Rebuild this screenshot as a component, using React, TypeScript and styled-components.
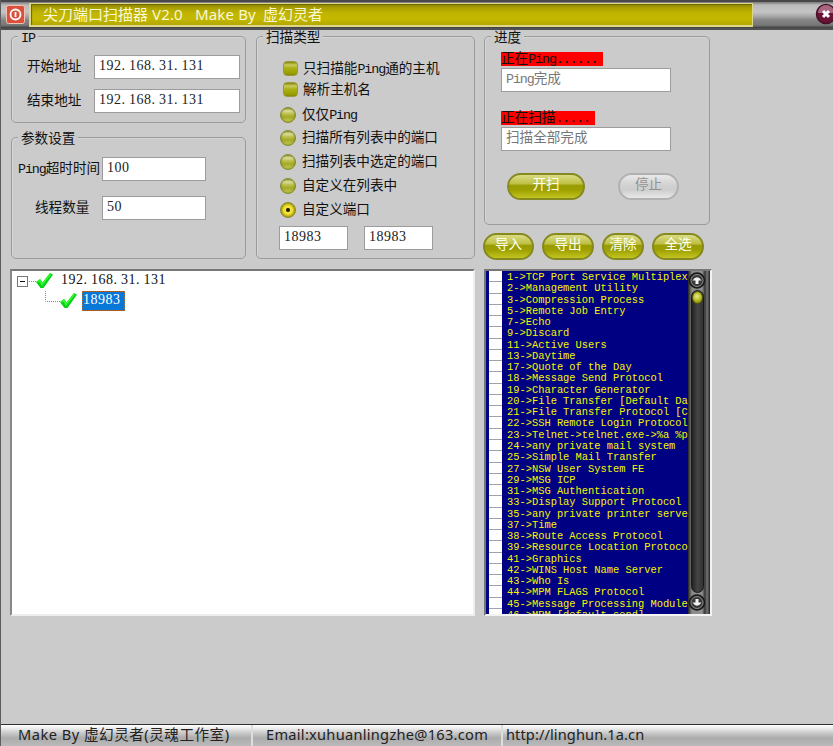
import React from "react";
import styled, { createGlobalStyle } from "styled-components";

const Global = createGlobalStyle`
  *, *::before, *::after { box-sizing: border-box; }
  body { margin: 0; background: #cbcbcb; overflow: hidden; }
`;

const song = `"Liberation Mono", "Noto Sans CJK SC", monospace`;
const ui = `"Noto Sans", "Noto Sans CJK SC", sans-serif`;

const Window = styled.div`
  width: 833px;
  height: 746px;
  display: flex;
  flex-direction: column;
  overflow: hidden;
  background: #cbcbcb;
  border-left: 1px solid #5d5d60;
  color: #111;
  font: 13.6px/16px ${song};
`;

const TitleBar = styled.header`
  height: 30px;
  flex: none;
  display: flex;
  align-items: flex-start;
  padding-top: 3px;
  border-top: 2px solid #48484a;
  border-bottom: 2px solid #505052;
  background: linear-gradient(#777 0, #bbb 3px, #c4c4c4 10px, #aaa 14px, #858585 18px, #777 23px, #555 25px, #333 26px);
`;

const AppIcon = styled.div`
  width: 19px;
  height: 19px;
  margin: 0 3px 0 5px;
  svg { display: block; }
`;

const TitlePlate = styled.h1`
  width: 724px;
  height: 24px;
  margin: -2px 0 0 1px;
  padding-left: 12px;
  border: 1px solid #ddd887;
  border-width: 1px 1px 2px 2px;
  background: linear-gradient(#8e8500 0, #aaa000 4px, #c1b500 9px, #c4b800 15px, #b3a700 21px);
  box-shadow: inset 1px 1px 1px #6f6900;
  color: #f8f7d8;
  font: 400 15px/20px ${ui};
  white-space: pre;
`;

const TitleLatin = styled.span<{ $w: number }>`
  display: inline-block;
  width: ${(p) => p.$w}px;
  letter-spacing: 0.15px;
`;

const CloseButton = styled.button`
  width: 22px;
  height: 22px;
  margin: -2px -4px 0 auto;
  padding: 0;
  border: 0;
  background: none;
  svg { display: block; }
`;

const Body = styled.main`
  flex: 1;
  display: grid;
  grid-template-columns: 465px 228px;
  column-gap: 9px;
  align-content: start;
  padding: 6px 0 0 9px;
`;

const LeftSide = styled.div`
  display: grid;
  grid-template-columns: 235px 219px;
  grid-template-rows: 223px 347px;
  column-gap: 10px;
  row-gap: 10px;
  padding-left: 1px;
`;

const Stack = styled.div`
  display: flex;
  flex-direction: column;
`;

const Group = styled.section<{ $h: number }>`
  height: ${(p) => p.$h}px;
  border: 1px solid #9b9b9b;
  border-radius: 5px;
  box-shadow: inset 1px 1px 0 #d6d6d6;
`;

const ParamGroup = styled(Group)`
  margin-top: 14px;
`;

const ProgressGroup = styled(Group)`
  width: 226px;
`;

const Legend = styled.h2`
  width: max-content;
  height: 14px;
  margin: -7px 0 0 6px;
  padding: 0 3px;
  background: #cbcbcb;
  font: 13.6px/17px ${song};
`;

const Latin = styled.span`
  font-size: 13.4px;
  letter-spacing: -1.1px;
`;

const Field = styled.div<{ $gap: number }>`
  height: 24px;
  display: flex;
  align-items: center;
  margin-top: ${(p) => p.$gap}px;
`;

const FieldLabel = styled.label<{ $w: number; $indent: number }>`
  flex: none;
  width: ${(p) => p.$w}px;
  padding: 2px 0 0 ${(p) => p.$indent}px;
  white-space: nowrap;
`;

const Box = styled.div<{ $w: number; $dim?: boolean }>`
  width: ${(p) => p.$w}px;
  height: 24px;
  flex: none;
  padding: ${(p) => (p.$dim ? "3px 0 0 4px" : "1px 0 0 4px")};
  border: 1px solid #9c9c9c;
  background: #fff;
  color: ${(p) => (p.$dim ? "#777" : "#222")};
  white-space: nowrap;
`;

const Digits = styled.span`
  font: 14px/18px "Liberation Serif", serif;
  letter-spacing: 0.5px;
`;

const Dot = styled.span`
  display: inline-block;
  width: 7.5px;
`;

const Option = styled.div<{ $gap: number; $square?: boolean }>`
  height: 16px;
  display: flex;
  align-items: center;
  gap: ${(p) => (p.$square ? 5 : 6)}px;
  padding-left: ${(p) => (p.$square ? 26 : 23)}px;
  margin-top: ${(p) => p.$gap}px;
  white-space: nowrap;
`;

const OptionText = styled.span`
  padding-top: 3px;
`;

const Check = styled.i`
  width: 15px;
  height: 15px;
  border: 1px solid #9b9a3b;
  border-radius: 4px;
  background: linear-gradient(#85850c 0, #c9cc5d 3px, #adb018 6px, #9ba000 11px, #858a00);
  margin-top: 1px;
`;

const Radio = styled.i<{ $on?: boolean }>`
  width: 16px;
  height: 16px;
  border: 1px solid #85882c;
  border-radius: 50%;
  margin-top: 1px;
  background: ${(p) =>
    p.$on
      ? "radial-gradient(circle, #221d00 0 1.5px, #f3e43d 2.5px 4px, #cfbd12 6px, #aba026)"
      : "linear-gradient(#a0a43c 0, #dcdfa0 3px, #b9be48 6px, #a4a928 9px, #c4c850 13px)"};
  box-shadow: inset 0 0 2px #777b10;
`;

const PortRange = styled.div`
  display: flex;
  gap: 16px;
  margin: 9px 0 0 22px;
`;

const Progress = styled.p<{ $w: number; $gap: number }>`
  width: ${(p) => p.$w}px;
  height: 14px;
  margin: ${(p) => p.$gap}px 0 2px 16px;
  background: #fe0000;
  line-height: 15px;
  white-space: nowrap;
`;

const Inset = styled.div`
  padding-left: 16px;
`;

const Pill = styled.button<{ $w: number; $off?: boolean }>`
  width: ${(p) => p.$w}px;
  height: 27px;
  padding: 0 0 2px;
  border: 2px solid ${(p) => (p.$off ? "#b1b1b1" : "#858920")};
  border-radius: 14px;
  background: ${(p) =>
    p.$off
      ? "linear-gradient(#e9e9e9, #d3d3d3 40%, #cdcdcd 65%, #e9e9e9)"
      : "linear-gradient(#dadc85 0, #bec044 38%, #989c00 46%, #9da000 65%, #c2c520 100%)"};
  color: ${(p) => (p.$off ? "#929292" : "#fffff0")};
  font: 13.6px/17px ${song};
  white-space: nowrap;
`;

const Actions = styled.div`
  display: flex;
  gap: 33px;
  margin: 22px 0 0 22px;
`;

const Toolbar = styled.div`
  display: flex;
  gap: 8px;
  margin: 8px 0 9px -1px;
`;

const Tree = styled.div`
  grid-column: 1 / -1;
  margin-left: -1px;
  padding: 0 0 0 5px;
  border: 2px solid #eee;
  border-top-color: #777;
  border-left-color: #888;
  background: #fff;
`;

const TreeRow = styled.div<{ $indent: number }>`
  height: 20px;
  display: flex;
  align-items: center;
  padding-left: ${(p) => p.$indent}px;
  svg { flex: none; }
`;

const TreeLabel = styled.span<{ $selected?: boolean }>`
  margin-left: ${(p) => (p.$selected ? 5 : 7)}px;
  padding: 0 1px;
  height: 20px;
  line-height: 18px;
  ${(p) =>
    p.$selected &&
    "width:43px;background:#0878d8;color:#fff;outline:1px dotted #b46a2c;outline-offset:-1px;"}
`;

const PortPane = styled.div`
  height: 347px;
  display: flex;
  border: 2px solid #f3f3f3;
  border-top-color: #777;
  border-left-color: #777;
  background: #000082;
  overflow: hidden;
`;

const PortList = styled.ul`
  width: 202px;
  margin: 0;
  padding: 0 0 0 3px;
  list-style: none;
  overflow: hidden;
`;

const PortItem = styled.li`
  height: 11.27px;
  display: flex;
  gap: 5px;
  color: #f6f600;
  font: 10.4px/12px "Liberation Mono", monospace;
  white-space: pre;
  &::before {
    content: "";
    flex: none;
    width: 13px;
    background: #fff;
    border-bottom: 1px solid #a2a2ae;
  }
`;

const ScrollBar = styled.div`
  width: 22px;
  height: 343px;
  flex: none;
  display: flex;
  flex-direction: column;
  align-items: center;
  padding: 0 4px 2px 0;
  background: linear-gradient(90deg, #222 0, #8b8b8b 4px, #909090 14px, #333 17px, #777 19px, #222 22px);
  svg { display: block; flex: none; }
`;

const Track = styled.div`
  flex: 1;
  width: 13px;
  border: 1px solid #181818;
  border-radius: 7px;
  background: linear-gradient(90deg, #222, #444 50%, #333);
`;

const Thumb = styled.div`
  width: 11px;
  height: 13px;
  border-radius: 50%;
  border: 1px solid #555b08;
  background: radial-gradient(circle at 45% 40%, #e8ec8c 0, #b5bb25 4px, #838900 7px);
`;

const StatusBar = styled.footer`
  height: 22px;
  flex: none;
  display: grid;
  grid-template-columns: 252px 250px 1fr;
  border-top: 1px solid #303030;
  background: linear-gradient(#fff 0, #eee 3px, #d0d0d0 7px, #ababab 13px, #b9b9b9 20px);
`;

const StatusCell = styled.div<{ $pad: number; $ls: number }>`
  padding-left: ${(p) => p.$pad}px;
  border-right: 2px solid #ddd;
  color: #222;
  font: 14.6px/18px ${ui};
  letter-spacing: ${(p) => p.$ls}px;
  white-space: nowrap;
  &:last-child { border-right: 0; }
`;

const Mixed = ({ text }: { text: string }) => (
  <>
    {text
      .split(/([\x20-\x7e]+)/)
      .map((part, i) => (i % 2 ? <Latin key={i}>{part}</Latin> : part))}
  </>
);

const Numeric = ({ value }: { value: string }) => (
  <Digits>
    {value.split(/(\.)/).map((part, i) => (i % 2 ? <Dot key={i}>{part}</Dot> : part))}
  </Digits>
);

const CheckMark = () => (
  <svg width="17" height="16" viewBox="0 0 17 16">
    <path d="M0 9 L4 6 L6.500 9.500 L14 0 L17 1.500 L7.500 15 L4.500 15 Z" fill="#08cf18" />
    <path d="M1.500 9 L4 7.500 L6 11.500 L14.500 1" fill="none" stroke="#2dfb2b" strokeWidth="1.800" />
  </svg>
);

const Branch = () => (
  <svg width="19" height="20" viewBox="0 0 19 20">
    <rect x=".5" y="5.500" width="10" height="10" fill="#fff" stroke="#777" />
    <path d="M3 10.500 H8" stroke="#111" />
    <path d="M12 10.500 H19" stroke="#888" strokeDasharray="1 1" />
  </svg>
);

const Elbow = () => (
  <svg width="15" height="20" viewBox="0 0 15 20">
    <path d="M.5 0 V10.500 H15" fill="none" stroke="#888" strokeDasharray="1 1" />
  </svg>
);

const ScrollArrow = ({ down }: { down?: boolean }) => (
  <svg width="18" height="19" viewBox="0 0 18 19">
    <circle cx="9" cy="9.500" r="7.500" fill="#3a3a3a" stroke="#161616" strokeWidth="1.500" />
    <circle cx="9" cy="9.500" r="6" fill="none" stroke="#888" />
    <path
      d="M4.500 9.500 Q9 3 13.500 9.500 H10.500 V13 H7.500 V9.500 Z"
      fill="#f4f4f4"
      transform={down ? "rotate(180 9 9.500)" : undefined}
    />
  </svg>
);

const options = [
  { label: "仅仅Ping", gap: 9 },
  { label: "扫描所有列表中的端口", gap: 7 },
  { label: "扫描列表中选定的端口", gap: 8 },
  { label: "自定义在列表中", gap: 8 },
  { label: "自定义端口", gap: 8, on: true },
];

const ports = [
  "1->TCP Port Service Multiplex",
  "2->Management Utility",
  "3->Compression Process",
  "5->Remote Job Entry",
  "7->Echo",
  "9->Discard",
  "11->Active Users",
  "13->Daytime",
  "17->Quote of the Day",
  "18->Message Send Protocol",
  "19->Character Generator",
  "20->File Transfer [Default Da",
  "21->File Transfer Protocol [C",
  "22->SSH Remote Login Protocol",
  "23->Telnet->telnet.exe->%a %p",
  "24->any private mail system",
  "25->Simple Mail Transfer",
  "27->NSW User System FE",
  "29->MSG ICP",
  "31->MSG Authentication",
  "33->Display Support Protocol",
  "35->any private printer serve",
  "37->Time",
  "38->Route Access Protocol",
  "39->Resource Location Protoco",
  "41->Graphics",
  "42->WINS Host Name Server",
  "43->Who Is",
  "44->MPM FLAGS Protocol",
  "45->Message Processing Module",
  "46->MPM [default send]",
];

export default function App() {
  return (
    <Window>
      <Global />
      <TitleBar>
        <AppIcon>
          <svg width="19" height="19" viewBox="0 0 19 19">
            <rect x=".5" y=".5" width="18" height="18" rx="2" fill="#d9513a" stroke="#f3c1b5" />
            <circle cx="9.500" cy="9.500" r="5" fill="none" stroke="#fff" strokeWidth="1.800" />
            <path d="M9.500 7 V12" stroke="#fff" strokeWidth="1.800" />
          </svg>
        </AppIcon>
        <TitlePlate>
          尖刀端口扫描器
          <TitleLatin $w={47}> V2.0</TitleLatin>
          <TitleLatin $w={68}>Make By</TitleLatin>
          虚幻灵者
        </TitlePlate>
        <CloseButton aria-label="close">
          <svg width="22" height="22" viewBox="0 0 22 22">
            <circle cx="11" cy="11" r="9.500" fill="#6b1237" stroke="#431023" strokeWidth="1.500" />
            <path d="M3 10 A8 8 0 0 1 19 10 Z" fill="#a66680" />
            <path d="M8 8 L14 14 M14 8 L8 14" stroke="#fff" strokeWidth="3" />
          </svg>
        </CloseButton>
      </TitleBar>

      <Body>
        <LeftSide>
          <Stack>
            <Group $h={87}>
              <Legend><Mixed text="IP" /></Legend>
              <Field $gap={11}>
                <FieldLabel $w={82} $indent={15}>开始地址</FieldLabel>
                <Box $w={146}><Numeric value="192.168.31.131" /></Box>
              </Field>
              <Field $gap={10}>
                <FieldLabel $w={82} $indent={15}>结束地址</FieldLabel>
                <Box $w={146}><Numeric value="192.168.31.131" /></Box>
              </Field>
            </Group>
            <ParamGroup $h={122}>
              <Legend>参数设置</Legend>
              <Field $gap={12}>
                <FieldLabel $w={90} $indent={6}><Mixed text="Ping超时时间" /></FieldLabel>
                <Box $w={104}><Numeric value="100" /></Box>
              </Field>
              <Field $gap={15}>
                <FieldLabel $w={90} $indent={23}>线程数量</FieldLabel>
                <Box $w={104}><Numeric value="50" /></Box>
              </Field>
            </ParamGroup>
          </Stack>

          <Group $h={223}>
            <Legend>扫描类型</Legend>
            <Option $gap={16} $square>
              <Check />
              <OptionText><Mixed text="只扫描能Ping通的主机" /></OptionText>
            </Option>
            <Option $gap={5} $square>
              <Check />
              <OptionText>解析主机名</OptionText>
            </Option>
            {options.map((o) => (
              <Option key={o.label} $gap={o.gap}>
                <Radio $on={o.on} />
                <OptionText><Mixed text={o.label} /></OptionText>
              </Option>
            ))}
            <PortRange>
              <Box $w={69}><Numeric value="18983" /></Box>
              <Box $w={69}><Numeric value="18983" /></Box>
            </PortRange>
          </Group>

          <Tree>
            <TreeRow $indent={0}>
              <Branch />
              <CheckMark />
              <TreeLabel><Numeric value="192.168.31.131" /></TreeLabel>
            </TreeRow>
            <TreeRow $indent={28}>
              <Elbow />
              <CheckMark />
              <TreeLabel $selected><Numeric value="18983" /></TreeLabel>
            </TreeRow>
          </Tree>
        </LeftSide>

        <Stack>
          <ProgressGroup $h={189}>
            <Legend>进度</Legend>
            <Progress $w={102} $gap={8}><Mixed text="正在Ping......" /></Progress>
            <Inset><Box $w={170} $dim><Mixed text="Ping完成" /></Box></Inset>
            <Progress $w={94} $gap={19}><Mixed text="正在扫描....." /></Progress>
            <Inset><Box $w={170} $dim>扫描全部完成</Box></Inset>
            <Actions>
              <Pill $w={78}>开扫</Pill>
              <Pill $w={61} $off>停止</Pill>
            </Actions>
          </ProgressGroup>
          <Toolbar>
            <Pill $w={51}>导入</Pill>
            <Pill $w={52}>导出</Pill>
            <Pill $w={42}>清除</Pill>
            <Pill $w={52}>全选</Pill>
          </Toolbar>
          <PortPane>
            <PortList>
              {ports.map((p) => <PortItem key={p}>{p}</PortItem>)}
            </PortList>
            <ScrollBar>
              <ScrollArrow />
              <Track><Thumb /></Track>
              <ScrollArrow down />
            </ScrollBar>
          </PortPane>
        </Stack>
      </Body>

      <StatusBar>
        <StatusCell $pad={17} $ls={0.5}>Make By 虚幻灵者(灵魂工作室)</StatusCell>
        <StatusCell $pad={13} $ls={0.28}>Email:xuhuanlingzhe@163.com</StatusCell>
        <StatusCell $pad={3} $ls={0.1}>http://linghun.1a.cn</StatusCell>
      </StatusBar>
    </Window>
  );
}
